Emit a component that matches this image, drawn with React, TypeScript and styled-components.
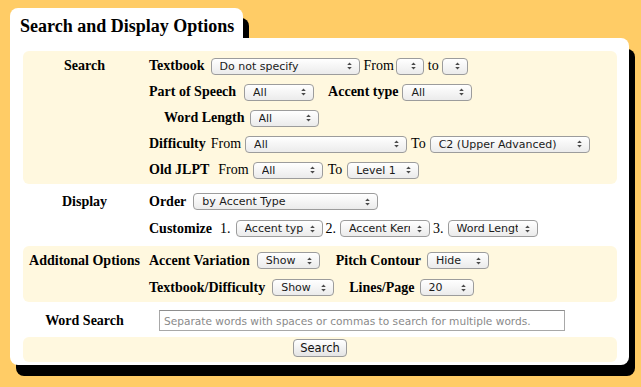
import styled, { createGlobalStyle } from "styled-components";

const GlobalStyle = createGlobalStyle`
  body {
    margin: 0;
    background: #ffcc66;
    font-family: "Liberation Serif", "Times New Roman", serif;
    color: #000;
  }
`;

const Page = styled.div`
  width: 641px;
  height: 387px;
  padding: 8px 0 0 10px;
  box-sizing: border-box;
`;

const Tab = styled.div`
  width: 233px;
  height: 30px;
  box-sizing: border-box;
  padding: 7px 0 0 10px;
  background: #fff;
  border-radius: 8px 8px 0 0;
  box-shadow: 6px 10px 0 #000;
`;

const Title = styled.h1`
  margin: 0;
  font-size: 18px;
  font-weight: bold;
  line-height: 22px;
  white-space: nowrap;
`;

const Panel = styled.div`
  position: relative;
  width: 619px;
  height: 327px;
  box-sizing: border-box;
  padding: 13px 12px 0 13px;
  background: #fff;
  border-radius: 0 8px 8px 8px;
  box-shadow: 6px 11px 0 #000;
`;

const Section = styled.div<{ $shaded?: boolean; $pad: string }>`
  display: grid;
  grid-template-columns: 123px 1fr;
  padding: ${(p) => p.$pad};
  border-radius: 6px;
  background: ${(p) => (p.$shaded ? "#fff8df" : "transparent")};
`;

const Heading = styled.div<{ $line: number; $middle?: boolean }>`
  text-align: center;
  font-size: 14px;
  font-weight: bold;
  line-height: ${(p) => p.$line}px;
  align-self: ${(p) => (p.$middle ? "center" : "start")};
`;

const Body = styled.div`
  padding-left: 3px;
`;

const Line = styled.div<{ $h: number; $indent?: number }>`
  display: flex;
  align-items: center;
  height: ${(p) => p.$h}px;
  padding-left: ${(p) => p.$indent ?? 0}px;
  font-size: 14px;
  white-space: nowrap;
`;

const Label = styled.span<{ $gap?: number }>`
  font-weight: bold;
  margin-left: ${(p) => p.$gap ?? 0}px;
`;

const Word = styled.span<{ $gap?: number }>`
  margin-left: ${(p) => p.$gap ?? 0}px;
`;

const SelectBox = styled.div<{ $w: number; $gap?: number }>`
  display: inline-flex;
  align-items: center;
  box-sizing: border-box;
  width: ${(p) => p.$w}px;
  height: 17px;
  margin-left: ${(p) => p.$gap ?? 5}px;
  padding: 0 7px 0 8px;
  border: 1px solid #9c9c9c;
  border-radius: 4px;
  background: linear-gradient(#ffffff, #ebebeb);
  font: 11px "DejaVu Sans", "Liberation Sans", sans-serif;
  color: #1a1a1a;
  white-space: nowrap;
  overflow: hidden;
`;

const SelectText = styled.span`
  flex: 1;
  min-width: 0;
  margin-right: 7px;
  overflow: hidden;
`;

const ArrowIcon = styled.svg`
  flex-shrink: 0;
  margin-left: auto;
`;

const TextInput = styled.input`
  box-sizing: border-box;
  width: 406px;
  height: 21px;
  margin-left: 10px;
  padding: 0 4px;
  border: 1px solid #a8a8a8;
  border-top-color: #8e8e8e;
  font: 10.6px "DejaVu Sans", "Liberation Sans", sans-serif;
  color: #333;
  outline: none;
  &::placeholder {
    color: #8a8a8a;
  }
`;

const ButtonRow = styled.div`
  display: flex;
  justify-content: center;
  padding: 2px 0 5px;
  border-radius: 6px;
  background: #fff8df;
`;

const Button = styled.button`
  width: 54px;
  height: 18px;
  padding: 0;
  border: 1px solid #9a9a9a;
  border-radius: 4px;
  background: linear-gradient(#ffffff, #e4e4e4);
  font: 11.5px "DejaVu Sans", "Liberation Sans", sans-serif;
  color: #111;
`;

function Arrows() {
  return (
    <ArrowIcon width="5" height="8" viewBox="0 0 5 8">
      <path d="M2.5 0.5 L4.8 3 H0.2 Z M0.2 5 H4.8 L2.5 7.5 Z" fill="#4a4a4a" />
    </ArrowIcon>
  );
}

function Select({ w, gap, children }: { w: number; gap?: number; children?: string }) {
  return (
    <SelectBox $w={w} $gap={gap}>
      {children && <SelectText>{children}</SelectText>}
      <Arrows />
    </SelectBox>
  );
}

export default function App() {
  return (
    <>
      <GlobalStyle />
      <Page>
        <Tab>
          <Title>Search and Display Options</Title>
        </Tab>
        <Panel>
          <Section $shaded $pad="2px 0 1px">
            <Heading $line={26}>Search</Heading>
            <Body>
              <Line $h={26}>
                <Label>Textbook</Label>
                <Select w={149} gap={6}>Do not specify</Select>
                <Word $gap={4}>From</Word>
                <Select w={28} gap={2} />
                <Word $gap={4}>to</Word>
                <Select w={26} gap={3} />
              </Line>
              <Line $h={26}>
                <Label>Part of Speech</Label>
                <Select w={70} gap={8}>All</Select>
                <Label $gap={14}>Accent type</Label>
                <Select w={70} gap={4}>All</Select>
              </Line>
              <Line $h={26} $indent={15}>
                <Label>Word Length</Label>
                <Select w={69}>All</Select>
              </Line>
              <Line $h={26}>
                <Label>Difficulty</Label>
                <Word $gap={5}>From</Word>
                <Select w={162} gap={4}>All</Select>
                <Word $gap={4}>To</Word>
                <Select w={160} gap={4}>C2 (Upper Advanced)</Select>
              </Line>
              <Line $h={26}>
                <Label>Old JLPT</Label>
                <Word $gap={9}>From</Word>
                <Select w={70} gap={4}>All</Select>
                <Word $gap={5}>To</Word>
                <Select w={72}>Level 1</Select>
              </Line>
            </Body>
          </Section>
          <Section $pad="4px 0">
            <Heading $line={27}>Display</Heading>
            <Body>
              <Line $h={27}>
                <Label>Order</Label>
                <Select w={185} gap={7}>by Accent Type</Select>
              </Line>
              <Line $h={27}>
                <Label>Customize</Label>
                <Word $gap={8}>1.</Word>
                <Select w={87}>Accent type</Select>
                <Word $gap={3}>2.</Word>
                <Select w={90} gap={4}>Accent Kernel</Select>
                <Word $gap={3}>3.</Word>
                <Select w={90} gap={4}>Word Length</Select>
              </Line>
            </Body>
          </Section>
          <Section $shaded $pad="1px 0">
            <Heading $line={27}>Additonal Options</Heading>
            <Body>
              <Line $h={27}>
                <Label>Accent Variation</Label>
                <Select w={63} gap={7}>Show</Select>
                <Label $gap={16}>Pitch Contour</Label>
                <Select w={62} gap={6}>Hide</Select>
              </Line>
              <Line $h={27}>
                <Label>Textbook/Difficulty</Label>
                <Select w={62} gap={7}>Show</Select>
                <Label $gap={15}>Lines/Page</Label>
                <Select w={54}>20</Select>
              </Line>
            </Body>
          </Section>
          <Section $pad="8px 0 6px">
            <Heading $line={21} $middle>
              Word Search
            </Heading>
            <Body>
              <Line $h={21}>
                <TextInput placeholder="Separate words with spaces or commas to search for multiple words." />
              </Line>
            </Body>
          </Section>
          <ButtonRow>
            <Button>Search</Button>
          </ButtonRow>
        </Panel>
      </Page>
    </>
  );
}
